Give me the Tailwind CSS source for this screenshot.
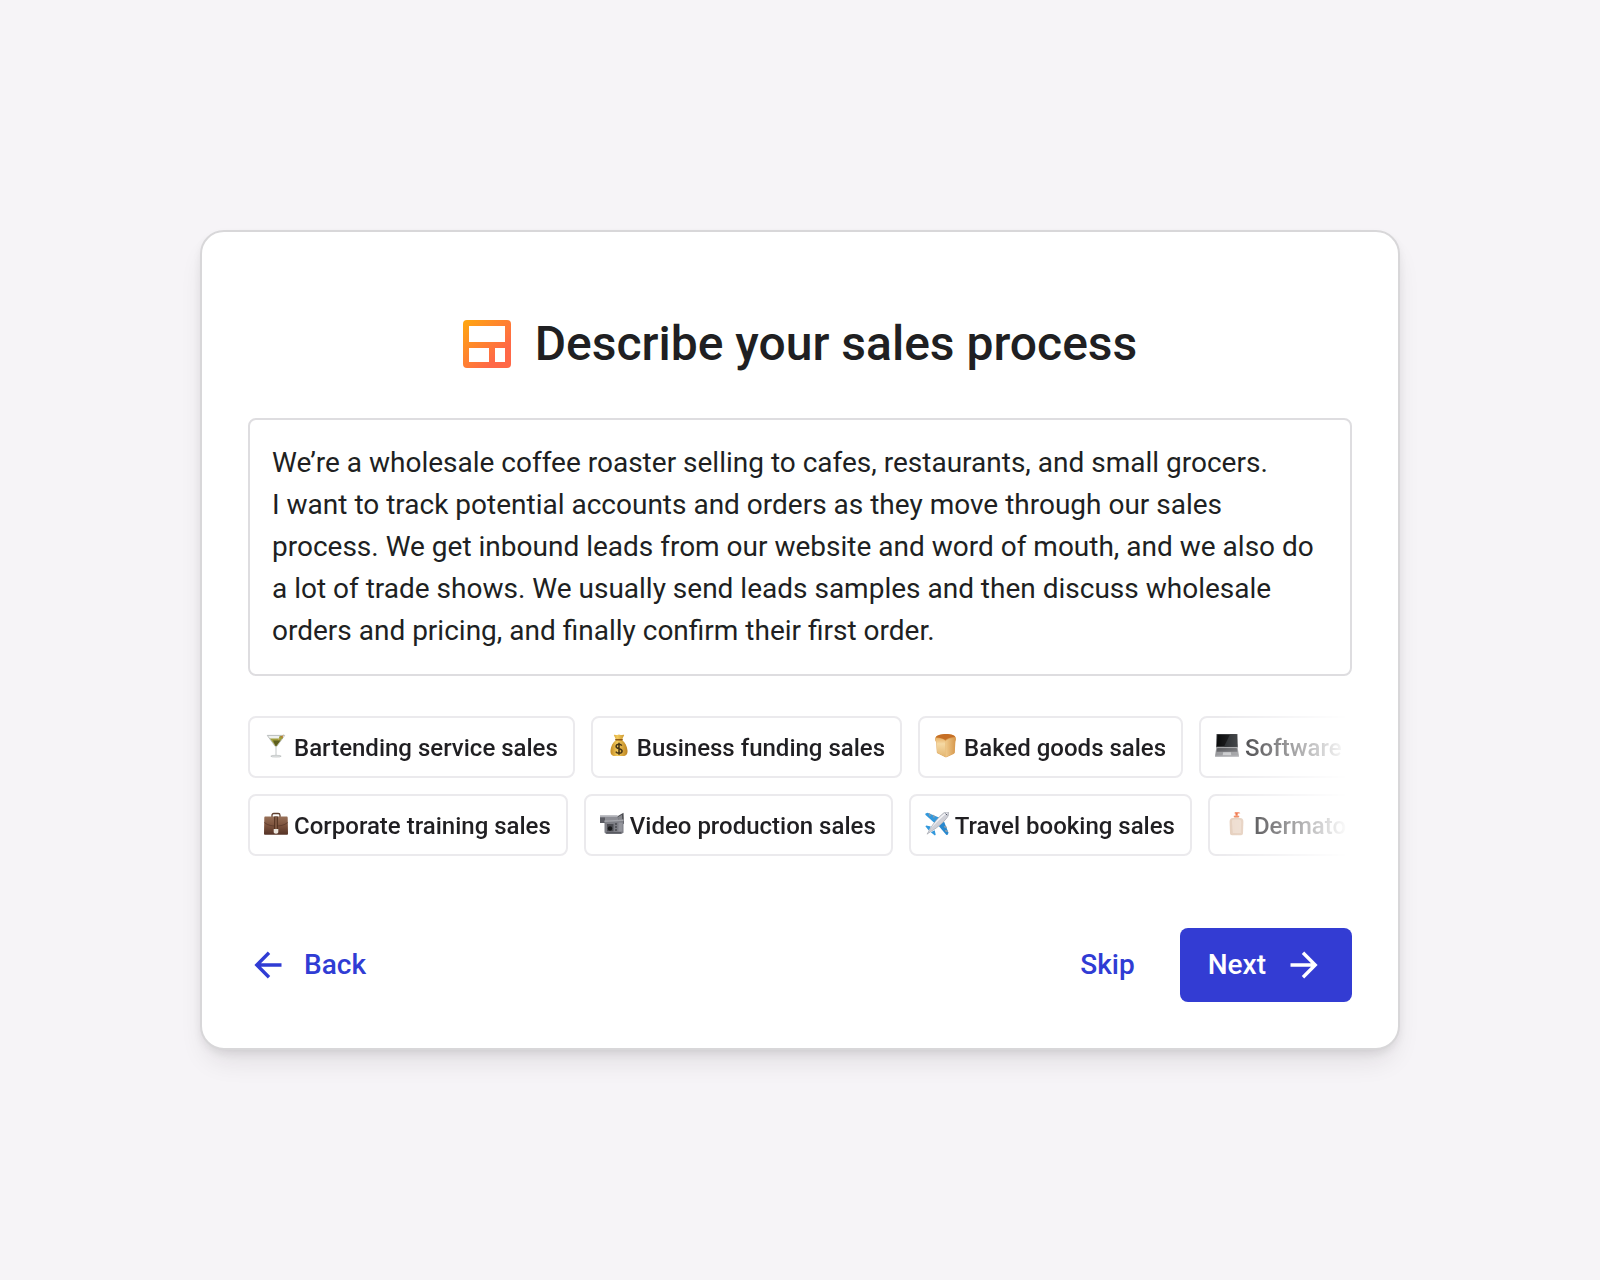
<!DOCTYPE html>
<html lang="en">

<head>
	<meta charset="utf-8">
	<meta name="viewport" content="width=device-width, initial-scale=1">
	<title>Describe your sales process</title>
	<script src="https://cdn.jsdelivr.net/npm/@tailwindcss/browser@4"></script>
</head>

<body class="flex min-h-screen items-center justify-center bg-[#f6f4f7] font-[Roboto,sans-serif] text-[#201f22]">
	<main class="w-full max-w-[1200px] rounded-3xl border-2 border-[#d8d7d9] bg-white px-[46px] pt-21 pb-[46px] shadow-[0_4px_10px_-2px_rgba(30,26,32,0.10),0_16px_28px_-8px_rgba(30,26,32,0.12)]">
		<div class="mb-[46px] flex items-center justify-center gap-6">
			<svg class="size-12" viewBox="0 0 48 48" aria-hidden="true">
				<defs>
					<linearGradient id="logo" x1="0" y1="0" x2="1" y2="1">
						<stop offset="0.05" stop-color="#ffa412" />
						<stop offset="0.75" stop-color="#ff6847" />
					</linearGradient>
				</defs>
				<path fill="url(#logo)" fill-rule="evenodd" d="M4 0h40a4 4 0 0 1 4 4v40a4 4 0 0 1-4 4H4a4 4 0 0 1-4-4V4a4 4 0 0 1 4-4zM6 6v16h36V6zM6 28v14h20V28zM32 28v14h10V28z" />
			</svg>
			<h1 class="text-[48px] leading-14 font-medium"><label for="process">Describe your sales process</label></h1>
		</div>

		<textarea id="process" rows="5" class="block w-full resize-none overflow-hidden rounded-lg border-2 border-[#dedde0] p-[22px] text-[28px] leading-[42px] outline-none">We’re a wholesale coffee roaster selling to cafes, restaurants, and small grocers.
I want to track potential accounts and orders as they move through our sales process. We get inbound leads from our website and word of mouth, and we also do a lot of trade shows. We usually send leads samples and then discuss wholesale orders and pricing, and finally confirm their first order.</textarea>

		<!-- suggestions, faded out at the right edge -->
		<div class="mt-10 flex flex-col gap-4 overflow-hidden mask-r-from-[calc(100%-136px)] mask-r-to-[calc(100%-4px)] text-2xl font-medium whitespace-nowrap">
			<div class="flex gap-4">
				<button type="button" class="flex h-[62px] shrink-0 items-center gap-1.5 rounded-lg border-2 border-[#ebeaed] pt-0.5 pr-[15px] pl-3.5">
					<svg class="h-7 w-6" viewBox="0 0 24 28" aria-hidden="true">
						<path d="M3.5 1.5h17L12.6 12.5h-1.2z" fill="#eef0ee" />
						<path d="M5.8 4.6h12.6L12.5 12.4h-1z" fill="#a09d3a" />
						<path d="M9 6.5h7.6L12.3 12h-.8z" fill="#5d5e1e" />
						<path d="M3.2 1.4h17.6" stroke="#b9bdbd" stroke-width="1" />
						<path d="M3.4 1.6l8 11M20.6 1.6l-8 11" stroke="#aeb3b1" stroke-width=".8" fill="none" />
						<path d="M14 6l5.5-5" stroke="#c4a75a" stroke-width="1" />
						<ellipse cx="17" cy="3.4" rx="2" ry="1.6" fill="#9c9d37" />
						<circle cx="18" cy="2.8" r=".7" fill="#d0572a" />
						<path d="M12 12.5v9" stroke="#cdd1d1" stroke-width="1.2" />
						<ellipse cx="12" cy="22.2" rx="5.2" ry=".9" fill="#e6e9e9" stroke="#a5a9a9" stroke-width=".5" />
					</svg>
					Bartending service sales
				</button>
				<button type="button" class="flex h-[62px] shrink-0 items-center gap-1.5 rounded-lg border-2 border-[#ebeaed] pt-0.5 pr-[15px] pl-3.5">
					<svg class="h-7 w-6" viewBox="0 0 24 28" aria-hidden="true">
						<defs>
							<linearGradient id="bag" x1="0" y1="0" x2="1" y2="0">
								<stop offset="0" stop-color="#c48b22" />
								<stop offset=".4" stop-color="#f3ca5c" />
								<stop offset="1" stop-color="#bd8420" />
							</linearGradient>
						</defs>
						<path fill="url(#bag)" d="M6.8 1c1.6-.9 2.4.4 3.4-.1 1.2-.7 2.3-.7 3.5 0 1 .5 2.2-.7 3.500.1L14.900 6c3.300 2.300 5.300 6.500 5.600 10.500.3 3.800-1.700 5.500-4.200 5.500H7.700c-2.500 0-4.500-1.700-4.200-5.500C3.800 12.500 5.800 8.300 9.100 6z" />
						<path d="M8.800 5.700h6.400" stroke="#915b15" stroke-width="1.500" stroke-linecap="round" />
						<path d="M14.800 11.700c-.6-1-1.500-1.400-2.800-1.400-1.700 0-2.900.8-2.900 2.200 0 3 6 1.500 6 4.500 0 1.500-1.300 2.300-3.100 2.300-1.500 0-2.600-.6-3.200-1.700M12 8.800v12" fill="none" stroke="#463516" stroke-width="1.500" />
					</svg>
					Business funding sales
				</button>
				<button type="button" class="flex h-[62px] shrink-0 items-center gap-1.5 rounded-lg border-2 border-[#ebeaed] pt-0.5 pr-[15px] pl-3.5">
					<svg class="h-7 w-6" viewBox="0 0 24 28" aria-hidden="true">
						<defs>
							<linearGradient id="loafLeft" x1="0" y1="0" x2="0" y2="1">
								<stop offset="0" stop-color="#e9b268" />
								<stop offset=".3" stop-color="#f5d9a4" />
								<stop offset="1" stop-color="#e3b56f" />
							</linearGradient>
							<linearGradient id="loafRight" x1="0" y1="0" x2="1" y2="0">
								<stop offset="0" stop-color="#f0cb8d" />
								<stop offset="1" stop-color="#d6974b" />
							</linearGradient>
						</defs>
						<path d="M1.500 3.500C3 .8 8 0 12 0c4.500 0 8.500 1 9.600 3.200.8 1.600.2 3-.2 4.300L20.800 18c0 1-.4 1.400-1.200 1.900L13 23c-.7.400-1.300.4-2 0L4 19.600c-.8-.4-1.200-.8-1.200-1.800L2.200 8C1 6.500.7 5 1.500 3.500z" fill="#dba058" />
						<path d="M1.600 4.300c2.800-.6 7.400.3 9.400 2.300.9.9.6 2.300.5 3.400v13L4 19.300c-.6-.3-.9-.7-.9-1.500L2.400 7.800C1.500 6.700 1.200 5.400 1.600 4.300z" fill="url(#loafLeft)" />
						<path d="M11.300 7.200C13.500 5 18 3.700 21.600 4.500c.2 1-.2 2-.5 3.200L20.500 18c0 .8-.4 1.200-1 1.500l-8 3.700z" fill="url(#loafRight)" />
						<path d="M1.600 3.500C3.500.9 8 .1 12 .1c4.500 0 8.400.9 9.500 3.300-3.500-.5-8 .8-10.200 2.700C9 4.200 4.500 3.200 1.600 3.500z" fill="#c66f25" />
					</svg>
					Baked goods sales
				</button>
				<button type="button" class="flex h-[62px] shrink-0 items-center gap-1.5 rounded-lg border-2 border-[#ebeaed] pt-0.5 pr-[15px] pl-3.5">
					<svg class="h-7 w-6" viewBox="0 0 24 28" aria-hidden="true">
						<path d="M1.500 0h21l.5 13.500H1z" fill="#55565a" />
						<path d="M2.300.5h19.400l.4 12H1.900z" fill="#070809" />
						<path d="M15 .5h6.700l.4 12h-13z" fill="#202326" />
						<path d="M1.300 13.500h21.400l1.300 8.700H0z" fill="#98999c" />
						<path d="M2.300 14.200h19.400l.6 3.300H1.700z" fill="#4a4b4e" />
						<path d="M2.200 15.300h19.600M2 16.500h20" stroke="#8b8c8f" stroke-width=".4" />
						<path d="M8.200 18.300h7.600l.5 3H7.700z" fill="#c9cacc" />
						<path d="M0 21.700h24l-.2 1.200H.2z" fill="#b7b8bb" />
					</svg>
					Software sales
				</button>
			</div>
			<div class="flex gap-4">
				<button type="button" class="flex h-[62px] shrink-0 items-center gap-1.5 rounded-lg border-2 border-[#ebeaed] pt-0.5 pr-[15px] pl-3.5">
					<svg class="h-7 w-6" viewBox="0 0 24 28" aria-hidden="true">
						<defs>
							<linearGradient id="leather" x1="0" y1="0" x2="0" y2="1">
								<stop offset="0" stop-color="#987058" />
								<stop offset=".5" stop-color="#7c523c" />
								<stop offset="1" stop-color="#543226" />
							</linearGradient>
						</defs>
						<path d="M8 5V3.200C8 2 8.700 1.500 9.800 1.500h4.400c1.100 0 1.800.5 1.800 1.700V5" fill="none" stroke="#60402f" stroke-width="1.300" />
						<path d="M1.500 4.500h21c.8 0 1.200.5 1.200 1.300L24 21.500c0 .8-.4 1.300-1.200 1.300H1.200c-.8 0-1.200-.5-1.200-1.300L.3 5.800c0-.8.4-1.300 1.200-1.300z" fill="url(#leather)" />
						<path d="M.3 10.500C4 13.500 8 14 12 14s8-.5 11.700-3.500" fill="none" stroke="#5a3a2c" stroke-width=".8" />
						<path d="M10.200 4.500h3.600v13h-3.600z" fill="#50301f" />
						<path d="M11 5h2v12h-2z" fill="#7d5641" />
						<path d="M9.700 17h4.600v3c0 1-.8 1.700-2.300 1.700S9.700 21 9.700 20z" fill="#ece5dc" />
					</svg>
					Corporate training sales
				</button>
				<button type="button" class="flex h-[62px] shrink-0 items-center gap-1.5 rounded-lg border-2 border-[#ebeaed] pt-0.5 pr-[15px] pl-3.5">
					<svg class="h-7 w-6" viewBox="0 0 24 28" aria-hidden="true">
						<path d="M17 4.500L23.500.8 24 12l-6-2z" fill="#4b4c51" />
						<path d="M18 5l4-2.200.3 6.700-4 .2z" fill="#85868b" />
						<path d="M0 3.500h17.500l.5 5.300H0z" fill="#8d8e95" />
						<path d="M0 3.500h17.500v1.300H0z" fill="#b9bac0" />
						<path d="M0 5.500h5v5.500H0z" fill="#5b5c63" />
						<path d="M4.500 8.500l19-1v13.200l-2.300 1.300H6.200l-1.700-1.500z" fill="#7d7e85" />
						<path d="M4.500 8.500l19-1v1.600l-19 1z" fill="#a4a5ab" />
						<path d="M7 12h6.500v7.300H7z" fill="#4b4c52" />
						<circle cx="10" cy="16.500" r="2.200" fill="#17181a" />
						<path d="M15 12h2M15 15h2M15 18h2" stroke="#303136" stroke-width="1.200" />
						<path d="M18.500 10.500h4v9h-4z" fill="#94959c" />
						<path d="M6.300 20.800h15" stroke="#4b4c52" stroke-width="1" />
					</svg>
					Video production sales
				</button>
				<button type="button" class="flex h-[62px] shrink-0 items-center gap-1.5 rounded-lg border-2 border-[#ebeaed] pt-0.5 pr-[15px] pl-3.5">
					<svg class="h-7 w-6" viewBox="0 0 24 28" aria-hidden="true">
						<path d="M14.500 5.800L2.500.8.500 1.500l-.2 1.300 9.200 8.200z" fill="#3298dc" />
						<path d="M19 9.500l4.500 11.300-.8 1.900-1.300.2-7.700-8.900z" fill="#2788cf" />
						<path d="M5.800 14.500l-4.500-1-.9.800 3.400 4.200zM9.700 18.200l1 4.500-.8.900-4.100-3.400z" fill="#3298dc" />
						<path d="M4.500 2l.5 1.500M8.500 3.600l.5 1.500M20.700 18.800l1.400.4M19.600 14.800l1.500.4" stroke="#8f9ba6" stroke-width="1.500" stroke-linecap="round" />
						<path d="M2 22.200l3.200-5.500C8 11.700 14 4.500 18.200 1.300c2-1.500 4.300-2 5.200-1.100.9.900.4 3.200-1.100 5.200-3.200 4.200-9.500 10-14.500 12.900z" fill="#cfd0d7" stroke="#8f929c" stroke-width=".5" />
						<path d="M6 16.500C9 11.500 14.500 5 18.700 2c1.400-1 3-1.400 3.700-1C18 4 10 11.500 6 16.500z" fill="#f4f4f7" />
						<path d="M20.500 1.500l1.700 1.700" stroke="#4e5665" stroke-width="1" />
					</svg>
					Travel booking sales
				</button>
				<button type="button" class="flex h-[62px] shrink-0 items-center gap-1.5 rounded-lg border-2 border-[#ebeaed] pt-0.5 pr-[15px] pl-3.5">
					<svg class="h-7 w-6" viewBox="0 0 24 28" aria-hidden="true">
						<path d="M10.300 1.200L11 .2h3.200c1 0 1.700.3 2.200 1l-2.700.3v2.300h-2.200V1.500z" fill="#ee6230" />
						<path d="M9.800 3.700h5.400v1.600H9.800z" fill="#f07a4b" />
						<path d="M10.500 5.300h4v1h-4z" fill="#e0a98c" />
						<path d="M9 6h7c2.500 0 3.400 1.500 3.400 4l-.4 11.300c-.1 1.200-.8 1.900-2 1.900H8c-1.200 0-1.900-.7-2-1.900L5.600 10c0-2.500.9-4 3.400-4z" fill="#e3cbb8" />
						<path d="M9.500 7.500h5.200c1.500 0 2.500.8 2.500 2.500L16.800 21h-8L8 10c0-1.700.3-2.500 1.500-2.500z" fill="#ecd9ca" />
					</svg>
					Dermatology sales
				</button>
			</div>
		</div>

		<div class="mt-18 flex items-center justify-between text-[28px] leading-[42px] font-medium">
			<button type="button" class="flex items-center gap-[22px] px-1.5 py-4 text-[#303cd4]">
				<svg class="size-7" viewBox="0 0 28 28" fill="none" stroke="currentColor" stroke-width="3.4" aria-hidden="true">
					<path d="M27.500 14H3M15 1.700L2.800 14 15 26.300" />
				</svg>
				Back
			</button>
			<div class="flex items-center gap-[45px]">
				<button type="button" class="py-4 text-[#303cd4]">Skip</button>
				<button type="button" class="flex items-center gap-6 rounded-lg bg-[#333cd3] py-4 pr-[34px] pl-7 text-white">
					Next
					<svg class="size-7" viewBox="0 0 28 28" fill="none" stroke="currentColor" stroke-width="3.4" aria-hidden="true">
						<path d="M.5 14H25M13 1.700L25.200 14 13 26.300" />
					</svg>
				</button>
			</div>
		</div>
	</main>
</body>

</html>
